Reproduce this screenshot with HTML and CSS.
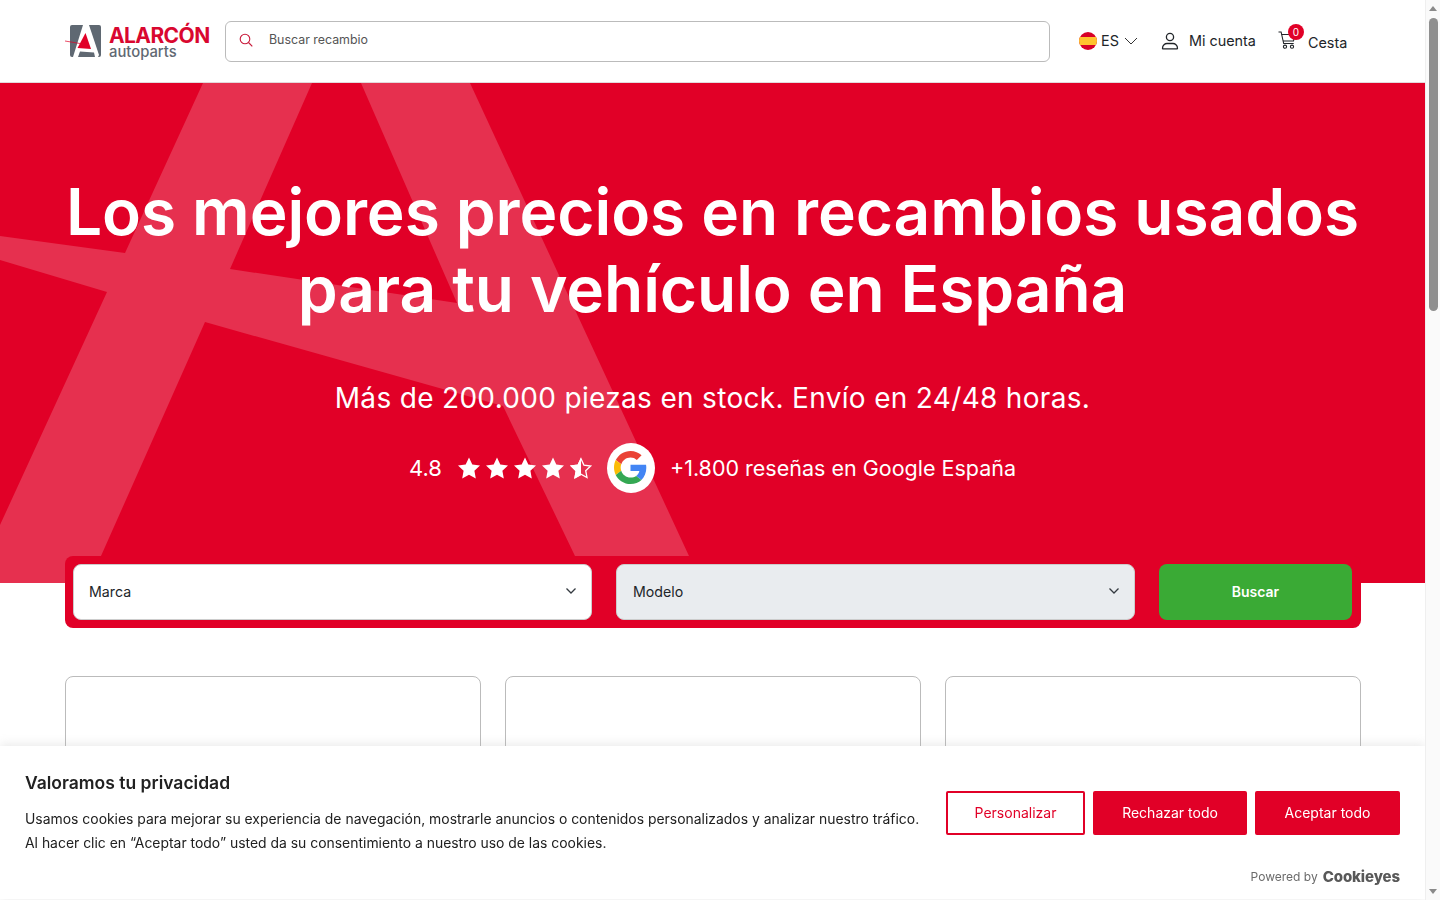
FILE: index.html
```html
<!DOCTYPE html>
<html lang="es">
<head>
<meta charset="utf-8">
<title>Alarcón Autoparts</title>
<link rel="stylesheet" href="styles.css">
</head>
<body>
<div class="page">
  <header class="header">
    <a class="logo" href="#">
      <svg class="logo-mark" width="36" height="33" viewBox="0 0 36 33">
        <rect x="5" y="0" width="31" height="32" rx="2" fill="#5f6872"/>
        <path fill="#fff" d="M18 0h6l10 30-1 2H8z"/>
        <path fill="#5f6872" d="M15 26.500l14 1 1 4.500H13z"/>
        <path fill="#e10027" d="M20.500 8l5.500 16-13.500-1z"/>
        <path stroke="#e10027" stroke-width=".7" d="M0 16l15 2.500"/>
      </svg>
      <span class="logo-text">
        <span class="logo-brand">ALARCÓN</span>
        <span class="logo-sub">autoparts</span>
      </span>
    </a>
    <div class="search">
      <svg width="14" height="14" viewBox="0 0 14 14" fill="none" stroke="#c8193a" stroke-width="1.100"><circle cx="6" cy="6" r="4.800"/><path d="M9.500 9.500l3.800 3.800"/></svg>
      <span class="search-text">Buscar recambio</span>
    </div>
    <nav class="nav">
      <span class="lang">
        <svg width="18" height="18" viewBox="0 0 18 18"><defs><clipPath id="flag"><circle cx="9" cy="9" r="9"/></clipPath></defs><g clip-path="url(#flag)"><rect width="18" height="18" fill="#d80027"/><rect y="5" width="18" height="8" fill="#ffc32e"/></g></svg>
        <span>ES</span>
        <svg class="lang-caret" width="14" height="8" viewBox="0 0 14 8" fill="none" stroke="#333" stroke-width="1"><path d="M1 1l6 6 6-6"/></svg>
      </span>
      <span class="account">
        <svg width="18" height="18" viewBox="0 0 18 18" fill="none" stroke="#212529" stroke-width="1.300"><circle cx="9" cy="5" r="3.600"/><path d="M1.500 16.200c0-3 2.500-4.700 4.500-4.700h6c2 0 4.500 1.700 4.500 4.700 0 .4-.3.600-.6.600H2.100c-.3 0-.6-.2-.6-.6z"/></svg>
        <span>Mi cuenta</span>
      </span>
      <span class="cart">
        <span class="cart-icon">
          <svg width="19" height="19" viewBox="0 0 19 19" fill="none" stroke="#212529" stroke-width="1.100"><path d="M.5 1h2.600l2.600 11.500h10"/><path d="M3.500 3.500h13.500l-1.500 6.500H5"/><circle cx="7" cy="15.700" r="1.600"/><circle cx="14" cy="15.700" r="1.600"/></svg>
          <span class="badge">0</span>
        </span>
        <span class="cart-text">Cesta</span>
      </span>
    </nav>
  </header>

  <section class="hero">
    <svg class="hero-bg" width="1425" height="500" viewBox="0 0 1425 500">
      <path fill="#e6304f" d="M203 0H312L230 186L457 220L361 0H470L689 473H575L503 323L205 239L89 500H0V442L107 209L0 177V153L125 170Z"/>
    </svg>
    <h1 class="hero-title">Los mejores precios en recambios usados<br>para tu vehículo en España</h1>
    <p class="hero-sub">Más de 200.000 piezas en stock. Envío en 24/48 horas.</p>
    <div class="rating">
      <span class="score">4.8</span>
      <span class="stars">
        <svg width="24" height="22" viewBox="0 0 24 22"><path fill="#fff" d="M12 .5l3.300 7 7.700 1-5.600 5.300 1.400 7.700-6.800-3.700-6.800 3.700 1.400-7.700L1 8.500l7.700-1z"/></svg>
        <svg width="24" height="22" viewBox="0 0 24 22"><path fill="#fff" d="M12 .5l3.300 7 7.700 1-5.600 5.300 1.400 7.700-6.800-3.700-6.800 3.700 1.400-7.700L1 8.500l7.700-1z"/></svg>
        <svg width="24" height="22" viewBox="0 0 24 22"><path fill="#fff" d="M12 .5l3.300 7 7.700 1-5.600 5.300 1.400 7.700-6.800-3.700-6.800 3.700 1.400-7.700L1 8.500l7.700-1z"/></svg>
        <svg width="24" height="22" viewBox="0 0 24 22"><path fill="#fff" d="M12 .5l3.300 7 7.700 1-5.600 5.300 1.400 7.700-6.800-3.700-6.800 3.700 1.400-7.700L1 8.500l7.700-1z"/></svg>
        <svg width="24" height="22" viewBox="0 0 24 22"><path fill="none" stroke="#fff" stroke-width="1.300" d="M12 1.800l2.900 6.300 6.800.9-5 4.700 1.300 6.800-6-3.300-6 3.300 1.300-6.800-5-4.700 6.800-.9z"/><path fill="#fff" d="M12 .5v17.800l-6.800 3.700 1.400-7.700L1 8.500l7.700-1z"/></svg>
      </span>
      <span class="google">
        <svg width="33" height="33" viewBox="0 0 48 48"><path fill="#EA4335" d="M24 9.500c3.500 0 6.700 1.200 9.200 3.600l6.900-6.900C35.900 2.400 30.500 0 24 0 14.600 0 6.500 5.400 2.600 13.200l8 6.200C12.400 13.700 17.700 9.500 24 9.500z"/><path fill="#4285F4" d="M47 24.500c0-1.600-.1-3.100-.4-4.500H24v9h12.900c-.6 3-2.200 5.500-4.700 7.200l7.700 6C44.400 37.900 47 31.800 47 24.500z"/><path fill="#FBBC05" d="M10.500 28.600c-.5-1.400-.8-3-.8-4.600s.3-3.200.8-4.600l-8-6.200C.9 16.500 0 20.100 0 24s.9 7.500 2.600 10.800z"/><path fill="#34A853" d="M24 48c6.500 0 11.900-2.100 15.900-5.800l-7.700-6c-2.200 1.500-4.900 2.300-8.200 2.300-6.300 0-11.600-4.200-13.500-9.900l-8 6.200C6.500 42.600 14.600 48 24 48z"/></svg>
      </span>
      <span class="reviews">+1.800 reseñas en Google España</span>
    </div>
  </section>

  <form class="finder">
    <div class="select">
      <span>Marca</span>
      <svg width="12" height="8" viewBox="0 0 12 8" fill="none" stroke="#343a40" stroke-width="1.300"><path d="M1.500 1.500L6 6l4.500-4.500"/></svg>
    </div>
    <div class="select select-off">
      <span>Modelo</span>
      <svg width="12" height="8" viewBox="0 0 12 8" fill="none" stroke="#343a40" stroke-width="1.300"><path d="M1.500 1.500L6 6l4.500-4.500"/></svg>
    </div>
    <button class="finder-btn" type="button">Buscar</button>
  </form>

  <section class="cards">
    <div class="card"></div>
    <div class="card"></div>
    <div class="card"></div>
  </section>
</div>

<aside class="cookie">
  <div class="cookie-main">
    <div class="cookie-copy">
      <h2 class="cookie-title">Valoramos tu privacidad</h2>
      <p class="cookie-text">Usamos cookies para mejorar su experiencia de navegación, mostrarle anuncios o contenidos personalizados y analizar nuestro tráfico. Al hacer clic en “Aceptar todo” usted da su consentimiento a nuestro uso de las cookies.</p>
    </div>
    <div class="cookie-actions">
      <button class="cookie-btn cookie-btn-outline" type="button">Personalizar</button>
      <button class="cookie-btn cookie-btn-reject" type="button">Rechazar todo</button>
      <button class="cookie-btn cookie-btn-accept" type="button">Aceptar todo</button>
    </div>
  </div>
  <div class="powered">Powered by <b class="cy">Cookieyes</b></div>
</aside>

<div class="scrollbar">
  <span class="arrow arrow-up"></span>
  <span class="thumb"></span>
  <span class="arrow arrow-down"></span>
</div>
</body>
</html>
```

FILE: styles.css
```css
* { box-sizing: border-box; }
html, body { margin: 0; height: 900px; overflow: hidden; }
body { font-family: Inter, "Liberation Sans", sans-serif; color: #212529; background: #fff; }
.page { width: 1425px; }

.header { height: 83px; padding: 1px 75px 0 65px; display: flex; align-items: center; border-bottom: 1px solid #e3d9db; }
.logo { width: 160px; display: flex; align-items: center; gap: 8px; text-decoration: none; flex: none; }
.logo-mark { flex: none; }
.logo-text { display: flex; flex-direction: column; padding-top: 2px; }
.logo-brand { font-size: 21px; font-weight: 700; line-height: 19px; color: #d9072f; letter-spacing: -.6px; }
.logo-sub { font-size: 14.800px; font-weight: 500; line-height: 15px; color: #5f6872; }
.search { width: 825px; height: 41px; border: 1px solid #bbb; border-radius: 6px; display: flex; align-items: center; padding: 0 0 4px 13px; gap: 16px; flex: none; }
.search-text { font-size: 12.400px; color: #555; }
.nav { display: flex; align-items: center; margin-left: 29px; padding-bottom: 2px; font-size: 14.400px; flex: 1; }
.lang { display: flex; align-items: center; gap: 4px; }
.lang-caret { margin-left: 1px; }
.account { display: flex; align-items: center; gap: 10px; margin-left: 23px; }
.cart { display: flex; align-items: center; margin-left: 22px; }
.cart-icon { position: relative; display: block; width: 19px; height: 19px; }
.badge { position: absolute; left: 10px; top: -7px; width: 16px; height: 16px; border-radius: 50%; background: #e10027; color: #fff; font-size: 10px; line-height: 16px; text-align: center; }
.cart-text { margin-left: 11px; padding-top: 3px; }

.hero { position: relative; height: 500px; background: #e10027; color: #fff; text-align: center; padding-top: 91px; overflow: hidden; }
.hero-bg { position: absolute; left: 0; top: 0; }
.hero-title, .hero-sub, .rating { position: relative; }
.hero-title { margin: 0; font-size: 64px; line-height: 76.800px; font-weight: 600; letter-spacing: -.08px; }
.hero-sub { margin: 53px 0 0; font-size: 28px; line-height: 34px; letter-spacing: .32px; }
.rating { display: flex; align-items: center; justify-content: center; margin-top: 28px; font-size: 22px; height: 50px; }
.stars { display: flex; margin-left: 15px; gap: 4px; }
.google { width: 48px; height: 50px; margin-left: 14px; border-radius: 50%; background: #fff; display: flex; align-items: center; justify-content: center; }
.reviews { margin-left: 15px; font-size: 21.500px; }

.finder { position: relative; width: 1296px; height: 72px; margin: -27px 0 0 65px; padding: 8px 9px 8px 8px; background: #e10027; border-radius: 8px; display: flex; gap: 24px; }
.select { width: 519px; height: 56px; background: #fff; border: 1px solid #ccc; border-radius: 8px; padding: 0 14px 2px 15px; display: flex; align-items: center; justify-content: space-between; font-size: 14.200px; }
.select-off { background: #e9ecef; padding-left: 16px; }
.finder-btn { width: 193px; height: 56px; border: 0; border-radius: 8px; padding: 0 0 2px; background: #3aaa35; color: #fff; font: 600 14px Inter, sans-serif; }

.cards { width: 1296px; margin: 48px 0 0 65px; display: grid; grid-template-columns: repeat(3, 416px); gap: 24px; }
.card { height: 200px; border: 1px solid #bbb; border-radius: 8px; }

.cookie { position: fixed; left: 0; bottom: 1px; width: 1425px; height: 153px; background: #fff; padding: 24px 25px 0; box-shadow: 0 -1px 10px rgba(172,171,171,.3); }
.cookie-main { display: flex; align-items: center; justify-content: space-between; }
.cookie-copy { width: 900px; }
.cookie-title { margin: 0; font-size: 17.500px; line-height: 26px; font-weight: 600; color: #212121; }
.cookie-text { margin: 11px 0 0; font-size: 13.930px; line-height: 24px; color: #212121; }
.cookie-actions { display: flex; gap: 8px; }
.cookie-btn { height: 44px; border-radius: 2px; font: 400 14px Inter, sans-serif; border: 2px solid #e10027; background: #e10027; color: #fff; padding: 0; }
.cookie-btn-outline { width: 139px; background: #fff; color: #e10027; }
.cookie-btn-reject { width: 154px; }
.cookie-btn-accept { width: 145px; }
.powered { margin-top: 12px; display: flex; align-items: center; justify-content: flex-end; gap: 5px; font-size: 12px; color: #6b6b6b; }
.cy { font-size: 15px; font-weight: 800; color: #595959; letter-spacing: -.1px; }

.scrollbar { position: fixed; right: 0; top: 0; width: 15px; height: 900px; background: #fafafa; border-left: 1px solid #efefef; display: flex; flex-direction: column; align-items: center; }
.arrow { width: 0; height: 0; border-left: 4.500px solid transparent; border-right: 4.500px solid transparent; flex: none; }
.arrow-up { border-bottom: 5px solid #8a8a8a; margin-top: 6px; }
.thumb { width: 9px; height: 293px; margin-top: 7px; background: #8f8f8f; border-radius: 5px; }
.arrow-down { border-top: 5px solid #8a8a8a; margin-top: auto; margin-bottom: 6px; }
```
